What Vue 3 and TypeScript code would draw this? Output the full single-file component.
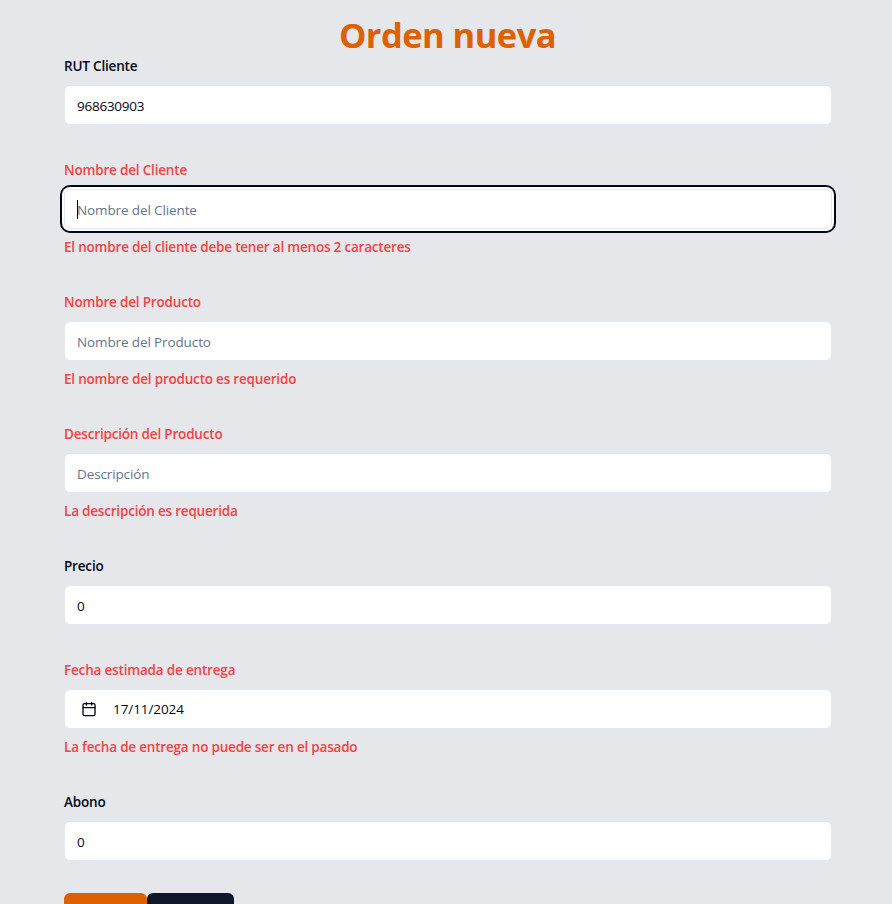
<script setup lang="ts">
interface Field {
  id: string
  label: string
  value?: string
  placeholder?: string
  error?: string
  focused?: boolean
  date?: boolean
}

const fields: Field[] = [
  { id: 'rut', label: 'RUT Cliente', value: '968630903' },
  { id: 'cliente', label: 'Nombre del Cliente', placeholder: 'Nombre del Cliente', error: 'El nombre del cliente debe tener al menos 2 caracteres', focused: true },
  { id: 'producto', label: 'Nombre del Producto', placeholder: 'Nombre del Producto', error: 'El nombre del producto es requerido' },
  { id: 'descripcion', label: 'Descripción del Producto', placeholder: 'Descripción', error: 'La descripción es requerida' },
  { id: 'precio', label: 'Precio', value: '0' },
  { id: 'fecha', label: 'Fecha estimada de entrega', value: '17/11/2024', error: 'La fecha de entrega no puede ser en el pasado', date: true },
  { id: 'abono', label: 'Abono', value: '0' },
]
</script>

<template>
  <main class="page">
    <h1 class="title"><span>Orden nueva</span></h1>
    <form class="form" @submit.prevent>
      <div v-for="f in fields" :key="f.id" class="field" :class="[f.id, { invalid: f.error }]">
        <label class="label"><span>{{ f.label }}</span></label>
        <div class="control" :class="{ focused: f.focused, date: f.date }">
          <svg v-if="f.date" class="icon" viewBox="0 0 24 24" fill="none" stroke="currentColor" stroke-width="2" stroke-linecap="round" stroke-linejoin="round">
            <path d="M8 2v4M16 2v4M3 10h18" />
            <rect x="3" y="4" width="18" height="18" rx="2" />
          </svg>
          <i v-if="f.focused" class="caret"></i>
          <span v-if="f.value" class="value">{{ f.value }}</span>
          <span v-else class="placeholder">{{ f.placeholder }}</span>
        </div>
        <p v-if="f.error" class="message"><span>{{ f.error }}</span></p>
      </div>
      <div class="actions">
        <button class="button primary" type="submit"></button>
        <button class="button secondary" type="button"></button>
      </div>
    </form>
  </main>
</template>

<style>
body { margin: 0; background: #e5e7eb; }
</style>

<style scoped>
.page {
  box-sizing: border-box;
  height: 904px;
  overflow: hidden;
  padding: 13px 60px 0 64px;
  background: #e5e7eb;
  color: #020817;
  font-family: "Segoe UI", "Open Sans", "Noto Sans", sans-serif;
  font-size: 13.5px;
}
.title {
  margin: 0;
  width: 767px;
  height: 40px;
  line-height: 43px;
  font-size: 34.5px;
  font-weight: 700;
  letter-spacing: -0.55px;
  text-align: center;
  color: #dd6100;
}
.form { display: flex; flex-direction: column; gap: 32px; width: 768px; }
.field { display: flex; flex-direction: column; gap: 8px; }
.label { height: 24px; line-height: 26px; font-weight: 600; letter-spacing: -0.18px; }
.invalid .label, .message { color: #ef4444; }
.control {
  box-sizing: border-box;
  display: flex;
  align-items: center;
  height: 40px;
  padding: 1px 12px 0;
  border: 1px solid #e2e8f0;
  border-radius: 6px;
  background: #fff;
}
.focused { box-shadow: 0 0 0 2px #fff, 0 0 0 4px #020817; }
.date { padding: 0 16px; }
.icon { width: 16px; height: 16px; margin-right: 16px; }
.caret { width: 1px; height: 19px; margin-right: -1px; background: #020817; }
.value { letter-spacing: -0.25px; }
.date .value { letter-spacing: -0.08px; }
.placeholder { color: #64748b; letter-spacing: -0.12px; }
.message { margin: 0; height: 20px; line-height: 20px; font-weight: 600; letter-spacing: -0.2px; }
.actions { display: flex; }
.button { height: 40px; padding: 0; border: 0; border-radius: 6px; }
.primary { width: 83px; background: #dd6100; }
.secondary { width: 87px; background: #0f172a; }
</style>
